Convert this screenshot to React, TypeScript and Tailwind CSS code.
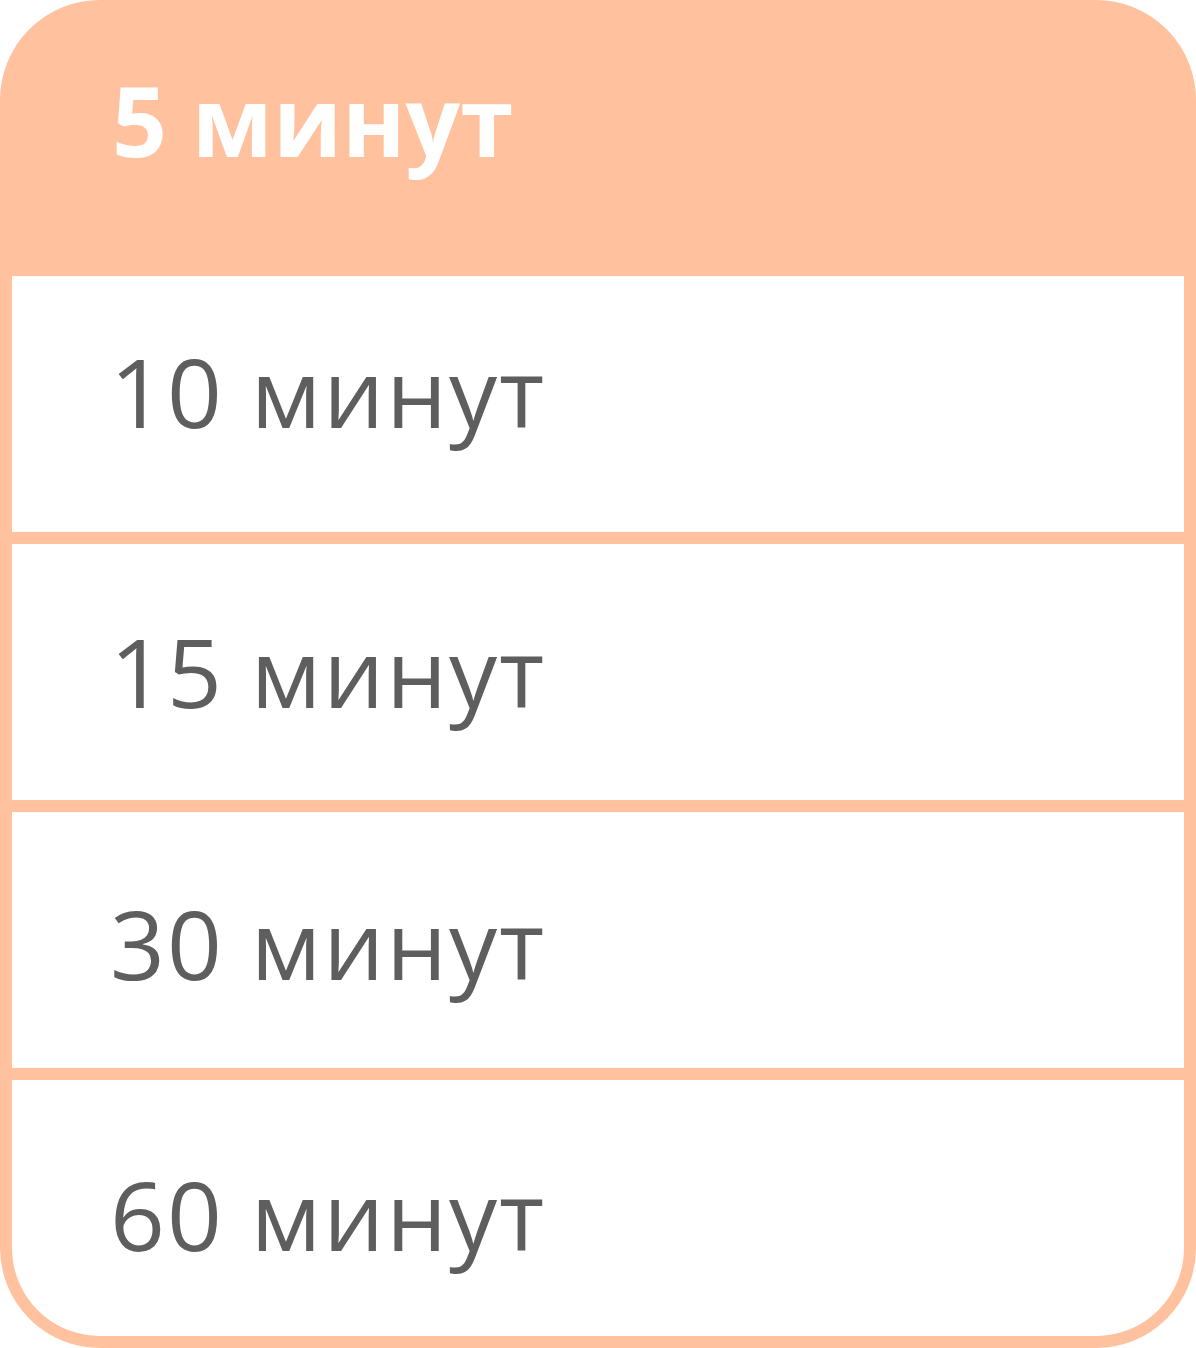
const rows = [
  { label: "10 минут", pad: "pt-[67px]" },
  { label: "15 минут", pad: "pt-[79px]" },
  { label: "30 минут", pad: "pt-[83px]" },
  { label: "60 минут", pad: "pt-[86px]" },
];

export default function App() {
  return (
    <div className="w-[1196px] h-[1348px] bg-white">
      <div
        className="flex h-full flex-col overflow-hidden rounded-[100px] border-[12px] border-[#ffc19e] bg-[#ffc19e]"
        style={{ fontFamily: '"Open Sans", "Noto Sans", sans-serif' }}
      >
        <div className="h-[264px] shrink-0 pl-[100px] pt-[60px]">
          <span className="text-[96px] font-bold leading-none text-white">5 минут</span>
        </div>
        <div className="flex flex-col gap-[12px]">
          {rows.map((r) => (
            <div key={r.label} className={`h-[256px] shrink-0 bg-white pl-[98px] ${r.pad}`}>
              <span className="text-[96px] font-normal leading-none tracking-[2px] text-[#5e5e5e]">
                {r.label}
              </span>
            </div>
          ))}
        </div>
      </div>
    </div>
  );
}
